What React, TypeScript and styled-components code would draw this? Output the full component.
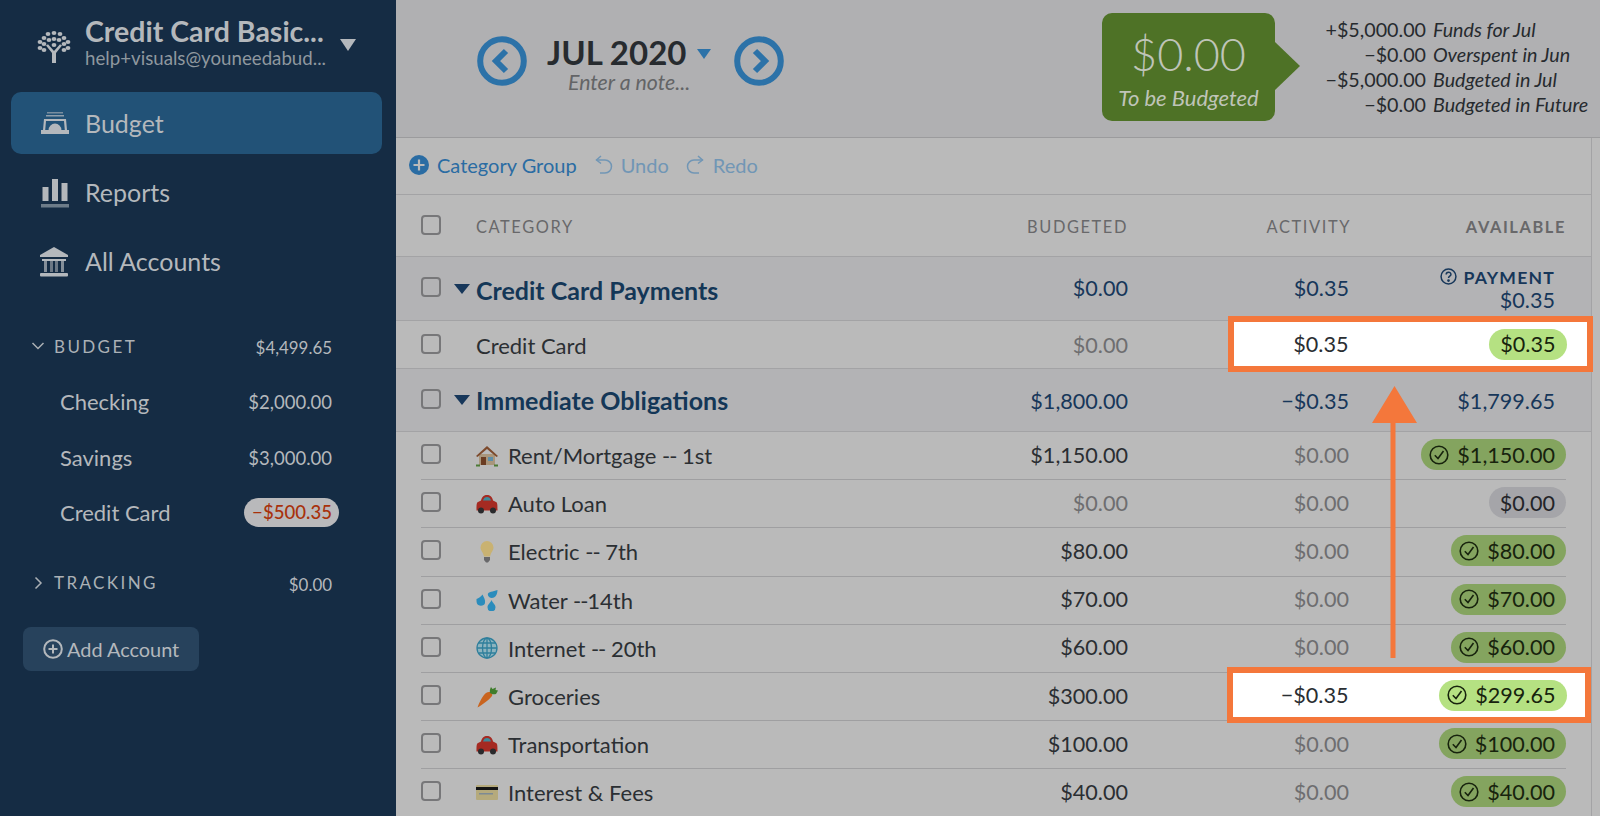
import React from "react";
import styled, { createGlobalStyle, css } from "styled-components";

const Global = createGlobalStyle`
  html, body { margin: 0; padding: 0; height: 100%; overflow: hidden; }
  body { font-family: Lato, "Open Sans", sans-serif; }
  #root { height: 100%; }
`;

const Page = styled.div`
  position: relative;
  width: 1600px;
  height: 816px;
  display: flex;
  overflow: hidden;
  background: #bababa;
`;

/* ---------- sidebar ---------- */
const Sidebar = styled.aside`
  width: 396px;
  flex: none;
  height: 816px;
  background: #152c44;
  color: #b4b8bc;
  display: flex;
  flex-direction: column;
  padding-top: 14px;
  box-sizing: border-box;
`;
const Brand = styled.div`
  height: 78px;
  display: grid;
  grid-template-columns: 85px 255px 1fr;
  align-items: center;
`;
const BrandLogo = styled.div`
  display: flex;
  justify-content: flex-end;
  padding: 3px 14px 16px 0;
`;
const BrandText = styled.div`
  display: flex;
  flex-direction: column;
  white-space: nowrap;
  padding-bottom: 22px;
`;
const BrandTitle = styled.div`
  font-size: 28.5px;
  line-height: 33px;
  font-weight: 700;
`;
const BrandMail = styled.div`
  font-size: 18.7px;
  line-height: 21px;
  color: #8f989f;
`;
const BrandCaret = styled.div`
  width: 0;
  height: 0;
  border-left: 8px solid transparent;
  border-right: 8px solid transparent;
  border-top: 12px solid #b4b8bc;
  margin-bottom: 16px;
`;
const NavItem = styled.div<{ $active?: boolean }>`
  margin: 0 14px 0 11px;
  height: 62px;
  margin-bottom: 7px;
  border-radius: 10px;
  display: grid;
  grid-template-columns: 74px 1fr;
  align-items: center;
  font-size: 25px;
  background: ${(p) => (p.$active ? "#225277" : "transparent")};
`;
const NavIcon = styled.div`
  display: flex;
  justify-content: flex-end;
  padding-right: 16px;
  padding-top: 2px;
`;
const Accounts = styled.div`
  margin-top: 32px;
  display: flex;
  flex-direction: column;
`;
const SectionRow = styled.div<{ $mt?: number }>`
  display: grid;
  grid-template-columns: 54px 1fr auto;
  align-items: center;
  height: 30px;
  padding: 0 64px 0 0;
  margin-top: ${(p) => p.$mt ?? 0}px;
`;
const SectionChevron = styled.div`
  display: flex;
  justify-content: flex-end;
  padding-right: 9px;
`;
const SectionLabel = styled.div`
  font-size: 17px;
  letter-spacing: 2.4px;
  color: #abb1b6;
`;
const SectionAmount = styled.div`
  font-size: 16.9px;
  padding-top: 3px;
`;
const AccountList = styled.div`
  margin-top: 13px;
`;
const AccountRow = styled.div`
  display: flex;
  justify-content: space-between;
  align-items: center;
  height: 55.5px;
  padding: 0 64px 0 60px;
  font-size: 22px;
`;
const AccountAmount = styled.span`
  font-size: 18.5px;
  padding-top: 1px;
`;
const DebtPill = styled.span`
  font-size: 18.6px;
  font-weight: 500;
  background: #b9b9bb;
  color: #a8310b;
  border-radius: 15px;
  height: 29px;
  line-height: 29px;
  padding: 0 7px 0 8px;
  margin-right: -7px;
`;
const AddButton = styled.div`
  margin: 29px 0 0 23px;
  width: 176px;
  height: 44px;
  box-sizing: border-box;
  border-radius: 8px;
  background: #27425c;
  display: flex;
  align-items: center;
  padding-left: 20px;
  gap: 4px;
  font-size: 19.9px;
`;

/* ---------- main ---------- */
const Main = styled.main`
  flex: 1;
  display: flex;
  flex-direction: column;
  min-width: 0;
`;
const TopBar = styled.header`
  height: 138px;
  flex: none;
  box-sizing: border-box;
  background: #b0b0b2;
  border-bottom: 1px solid #9b9b9d;
  display: flex;
  align-items: flex-start;
`;
const MonthNav = styled.div`
  margin-left: 81px;
  margin-top: 36px;
  display: flex;
  align-items: flex-start;
  width: 625px;
`;
const CircleBtn = styled.div`
  width: 50px;
  height: 50px;
  flex: none;
`;
const MonthBlock = styled.div`
  width: 207px;
  display: flex;
  flex-direction: column;
  align-items: flex-start;
  padding-left: 20px;
  box-sizing: border-box;
`;
const MonthTitle = styled.div`
  display: flex;
  align-items: center;
  gap: 11px;
  font-size: 33px;
  line-height: 33px;
  font-weight: 700;
  color: #272b2f;
  white-space: nowrap;
`;
const MonthCaret = styled.span`
  width: 0;
  height: 0;
  border-left: 7px solid transparent;
  border-right: 7px solid transparent;
  border-top: 10px solid #2c72a8;
  margin-top: 2px;
`;
const MonthNote = styled.div`
  margin: 0 0 0 21px;
  font-size: 21.3px;
  line-height: 26px;
  font-style: italic;
  color: #636466;
`;
const BudgetBubble = styled.div`
  position: relative;
  margin-top: 13px;
  width: 173px;
  height: 108px;
  background: #4e7226;
  border-radius: 10px;
  color: #bfc4b8;
  display: flex;
  flex-direction: column;
  align-items: center;
  &::after {
    content: "";
    position: absolute;
    left: 100%;
    top: 29px;
    border-top: 24px solid transparent;
    border-bottom: 24px solid transparent;
    border-left: 25px solid #4e7226;
  }
`;
const BubbleAmount = styled.div`
  font-size: 45px;
  font-weight: 300;
  line-height: 58px;
  margin-top: 12px;
`;
const BubbleLabel = styled.div`
  font-size: 22px;
  line-height: 26px;
  font-style: italic;
  margin-top: 2px;
`;
const Summary = styled.div`
  margin-left: 24px;
  margin-top: 17px;
  display: grid;
  grid-template-columns: 127px auto;
  column-gap: 7px;
  grid-auto-rows: 25px;
  align-items: center;
  font-size: 19.7px;
  color: #262a2e;
  white-space: nowrap;
`;
const SummaryAmount = styled.div`
  text-align: right;
`;
const SummaryLabel = styled.div`
  font-style: italic;
`;

const Content = styled.div`
  flex: 1;
  display: flex;
  flex-direction: column;
  border-right: 1px solid #a3a3a5;
  margin-right: 8px;
  min-height: 0;
`;
const Toolbar = styled.div`
  height: 57px;
  flex: none;
  box-sizing: border-box;
  border-bottom: 1px solid #a3a3a5;
  display: flex;
  align-items: center;
  padding: 0 0 3px 13px;
  font-size: 20px;
`;
const ToolButton = styled.div<{ $muted?: boolean; $gap: number; $ml?: number }>`
  display: flex;
  align-items: center;
  gap: ${(p) => p.$gap}px;
  margin-left: ${(p) => p.$ml ?? 0}px;
  color: ${(p) => (p.$muted ? "#7196b5" : "#2a6ca3")};
`;

const rowGrid = css`
  display: grid;
  grid-template-columns: 20px 35px 1fr 200px 221px 217px;
  align-items: center;
  box-sizing: border-box;
`;
const TableHead = styled.div`
  ${rowGrid}
  height: 62px;
  flex: none;
  padding: 0 25px 0 25px;
  border-bottom: 1px solid #a3a3a5;
  font-size: 16.4px;
  letter-spacing: 1.6px;
  color: #68686a;
`;
const HeadCell = styled.div<{ $col: number; $bold?: boolean }>`
  grid-column: ${(p) => p.$col};
  text-align: ${(p) => (p.$col === 3 ? "left" : "right")};
  font-weight: ${(p) => (p.$bold ? 700 : 400)};
  padding-top: 2px;
  margin-right: ${(p) => (p.$col === 5 ? -2 : 0)}px;
`;
const Checkbox = styled.div`
  width: 20px;
  height: 20px;
  box-sizing: border-box;
  border: 2px solid #777779;
  border-radius: 4px;
  grid-column: 1;
  margin-top: -1px;
`;
const GroupRow = styled.div<{ $h: number }>`
  ${rowGrid}
  height: ${(p) => p.$h}px;
  flex: none;
  padding: 0 25px 2px 25px;
  background: #b3b3b5;
  border-bottom: 1px solid #a3a3a5;
  color: #17375a;
  font-size: 21.6px;
`;
const GroupCaret = styled.div`
  width: 0;
  height: 0;
  margin-left: 13px;
  margin-top: 2px;
  border-left: 8px solid transparent;
  border-right: 8px solid transparent;
  border-top: 10px solid #17375a;
`;
const GroupTitle = styled.div<{ $pt: number }>`
  font-size: 25px;
  font-weight: 700;
  color: #143757;
  padding-top: ${(p) => p.$pt}px;
  white-space: nowrap;
`;
const Amount = styled.div<{ $col: number; $tone?: "dim" | "dark"; $pr?: number; $pt?: number }>`
  grid-column: ${(p) => p.$col};
  text-align: right;
  padding-right: ${(p) => p.$pr ?? 0}px;
  padding-top: ${(p) => p.$pt ?? 0}px;
  font-size: 21.6px;
  ${(p) => p.$tone === "dim" && "color: #6e6e70;"}
  ${(p) => p.$tone === "dark" && "color: #2a2e32;"}
`;
const PaymentCell = styled.div`
  grid-column: 6;
  text-align: right;
  padding: 2px 11px 0 0;
  line-height: 22px;
`;
const PaymentLabel = styled.div`
  display: flex;
  justify-content: flex-end;
  align-items: center;
  gap: 6px;
  font-size: 17.6px;
  line-height: 22px;
  font-weight: 700;
  letter-spacing: 1.2px;
`;
const HelpMark = styled.span`
  display: flex;
  margin-top: -3px;
`;
const CatRow = styled.div<{ $full?: boolean; $h?: number }>`
  ${rowGrid}
  height: ${(p) => p.$h ?? 48.2}px;
  flex: none;
  border-bottom: 1px solid ${(p) => (p.$full ? "#a3a3a5" : "#9f9fa1")};
  padding: ${(p) => (p.$full ? "0 25px" : "0 0 2px")};
  margin: ${(p) => (p.$full ? "0" : "0 25px")};
`;
const CatName = styled.div`
  grid-column: 3;
  display: flex;
  align-items: center;
  gap: 10px;
  font-size: 22px;
  color: #2b2f33;
  padding-top: 2px;
  white-space: pre;
`;
const Dashes = styled.span`
  letter-spacing: -1px;
`;
const EmojiBox = styled.div`
  width: 22px;
  height: 22px;
  flex: none;
`;
const PillCell = styled.div`
  grid-column: 6;
  display: flex;
  justify-content: flex-end;
`;
const Pill = styled.div<{ $tone: "green" | "gray" | "light"; $plain?: boolean }>`
  height: 31px;
  border-radius: 16px;
  display: flex;
  align-items: center;
  gap: 8px;
  padding: 0 11px 0 ${(p) => (p.$plain ? 11 : 8)}px;
  font-size: 21.6px;
  color: #17230d;
  background: ${(p) =>
    p.$tone === "green" ? "#84a45f" : p.$tone === "gray" ? "#a5a5a9" : "#b5e182"};
  ${(p) => p.$tone === "gray" && "color: #232428;"}
`;

/* ---------- annotations ---------- */
const Callout = styled.div<{ $left: number; $top: number; $w: number }>`
  position: absolute;
  left: ${(p) => p.$left}px;
  top: ${(p) => p.$top}px;
  width: ${(p) => p.$w}px;
  height: 56px;
  box-sizing: border-box;
  background: #fff;
  border: 6.5px solid #f4773b;
  display: flex;
  align-items: center;
  justify-content: space-between;
`;
const CalloutActivity = styled.div<{ $w: number }>`
  width: ${(p) => p.$w}px;
  text-align: right;
  font-size: 21.6px;
  color: #2a2e32;
`;
const CalloutPill = styled.div<{ $mr: number }>`
  margin-right: ${(p) => p.$mr}px;
`;
const ArrowLayer = styled.svg`
  position: absolute;
  left: 1368px;
  top: 384px;
  overflow: visible;
`;

/* ---------- drawings ---------- */
const TreeLogo = () => (
  <svg width="34" height="34" viewBox="0 0 34 34" fill="#b4b8bc">
    <path d="M15 33V23L9 15.500l2-1.200 6 6.700 6-6.700 2 1.200-6 7.500V33z" />
    {[[17,3],[17,9],[11,4],[23,4],[7,8],[27,8],[12,10],[22,10],[3,12],[31,12],[7,14],[27,14],[3,18],[31,18],[7,20],[27,20],[17,15]].map(([x,y],i)=>(
      <ellipse key={i} cx={x} cy={y} rx="2.4" ry="1.9" />
    ))}
  </svg>
);
const BudgetIcon = () => (
  <svg width="28" height="24" viewBox="0 0 28 24" fill="#b4b8bc">
    <rect x="6" y="0" width="16" height="1.5" opacity=".6" />
    <rect x="5" y="3" width="18" height="1.5" opacity=".75" />
    <path d="M3 7h22l1 11h2v4H0v-4h2zM5 9l-.8 9h3.400a6.400 6.400 0 0 1 12.800 0h3.400L23 9z" fillRule="evenodd" />
    <path d="M9.500 18a4.500 4.500 0 0 1 9 0z" opacity=".9" />
  </svg>
);
const ReportsIcon = () => (
  <svg width="28" height="30" viewBox="0 0 28 30" fill="#b4b8bc">
    <rect x="1.500" y="9" width="6" height="14" />
    <rect x="11" y="1" width="6" height="22" />
    <rect x="20.500" y="5" width="6" height="18" />
    <rect x="0" y="26" width="28" height="3.500" fill="#6d7c89" />
  </svg>
);
const BankIcon = () => (
  <svg width="30" height="30" viewBox="0 0 30 30" fill="#b4b8bc">
    <path d="M15 0 29 8v2H1V8z" />
    <rect x="3" y="12" width="24" height="2" />
    <rect x="5" y="14" width="3" height="11" opacity=".7" />
    <rect x="11" y="14" width="3" height="11" opacity=".55" />
    <rect x="16" y="14" width="3" height="11" opacity=".55" />
    <rect x="22" y="14" width="3" height="11" opacity=".7" />
    <rect x="1" y="26" width="28" height="3.500" rx="1" />
  </svg>
);
const Chevron = ({ dir }: { dir: "down" | "right" }) => (
  <svg width="14" height="14" viewBox="0 0 14 14" fill="none" stroke="#aab0b5" strokeWidth="1.500">
    {dir === "down" ? <path d="M1.500 4 7 9.500 12.500 4" /> : <path d="M4.500 1.500 10 7l-5.500 5.500" />}
  </svg>
);
const PlusOutline = () => (
  <svg width="20" height="20" viewBox="0 0 20 20" fill="none" stroke="#b4b8bc" strokeWidth="2">
    <circle cx="10" cy="10" r="8.800" />
    <path d="M10 5.500v9M5.500 10h9" />
  </svg>
);
const CircleArrow = ({ dir }: { dir: "l" | "r" }) => (
  <svg width="50" height="50" viewBox="0 0 50 50" fill="none" stroke="#2c72a8">
    <circle cx="25" cy="25" r="21.800" strokeWidth="6" />
    <path d={dir === "l" ? "M29 15 19 25l10 10" : "M21 15l10 10-10 10"} strokeWidth="6" />
  </svg>
);
const PlusSolid = () => (
  <svg width="20" height="20" viewBox="0 0 20 20">
    <circle cx="10" cy="10" r="10" fill="#2a6ca3" />
    <path d="M10 4.500v11M4.500 10h11" stroke="#bababa" strokeWidth="2.200" />
  </svg>
);
const UndoIcon = ({ flip }: { flip?: boolean }) => (
  <svg width="18" height="20" viewBox="0 0 18 20" fill="none" stroke="#7196b5" strokeWidth="1.500"
    style={flip ? { transform: "scaleX(-1)" } : undefined}>
    <path d="M6 1 1.500 5 6 8.500" />
    <path d="M1.500 5H10a6.500 6.500 0 0 1 0 13H5" />
  </svg>
);
const HelpIcon = () => (
  <svg width="17" height="17" viewBox="0 0 16 16" fill="none" stroke="#17375a" strokeWidth="1.400">
    <circle cx="8" cy="8" r="7" />
    <path d="M5.800 6.200c0-3 4.500-3 4.500-.2 0 1.700-2.300 1.700-2.300 3.400" />
    <circle cx="8" cy="11.800" r=".6" fill="#17375a" />
  </svg>
);
const CheckCircle = () => (
  <svg width="20" height="20" viewBox="0 0 20 20" fill="none" stroke="#17230d" strokeWidth="1.600">
    <circle cx="10" cy="10" r="8.800" />
    <path d="M5.800 10.300 9 13.500l5.500-7.500" />
  </svg>
);

const Emoji = ({ kind }: { kind: string }) => {
  switch (kind) {
    case "house":
      return (
        <svg width="22" height="22" viewBox="0 0 22 22">
          <rect x="3" y="9" width="16" height="11" fill="#a9967c" />
          <path d="M11 1 0 11l1.500 1L11 4l9.500 8 1.500-1z" fill="#7d4a2c" />
          <rect x="5" y="12" width="5" height="8" fill="#6a3c22" />
          <rect x="12" y="12" width="5" height="4" fill="#5d8ea8" />
          <rect x="0" y="19.500" width="4" height="2" fill="#4b7a34" />
          <rect x="18" y="19.500" width="4" height="2" fill="#4b7a34" />
        </svg>
      );
    case "car":
      return (
        <svg width="22" height="22" viewBox="0 0 22 22">
          <path d="M5 7.500c1-4 3-5.500 6-5.500s5 1.500 6 5.500l3 1.500c1.500.8 1.500 3 1.500 8.500H.5c0-5.500 0-7.700 1.500-8.500z" fill="#a52a22" />
          <path d="M7 7.500c.7-2.500 2-3.500 4-3.500s3.300 1 4 3.500z" fill="#3f8a9a" />
          <circle cx="5" cy="17.500" r="3" fill="#2a2a2c" />
          <circle cx="17" cy="17.500" r="3" fill="#2a2a2c" />
        </svg>
      );
    case "bulb":
      return (
        <svg width="22" height="22" viewBox="0 0 22 22">
          <path d="M11 0a6.500 6.500 0 0 0-6.500 6.500c0 3 2.500 4.500 3.500 9h6c1-4.500 3.500-6 3.500-9A6.500 6.500 0 0 0 11 0z" fill="#c9b272" />
          <path d="M8 16h6v3l-2 2.500h-2L8 19z" fill="#68686a" />
        </svg>
      );
    case "water":
      return (
        <svg width="22" height="22" viewBox="0 0 22 22" fill="#2b8cbc">
          <path d="M.5 10c2.200-1 4.500-2.200 6-4.500C8 8.500 9.500 11 9 14c-.6 3.500-7.400 3.500-8.200 0-.4-1.400-.3-2.700-.3-4z" />
          <path d="M21.500 1c-.2 3.500-1 6-3.500 7.500-2.500 1.200-6.200 0-6.200-3.200C12 2.500 17 2.800 21.500 1z" />
          <path d="M15.500 11c1 2.800 4 4.500 4 7.300a4 4 0 0 1-8 0c0-2.800 3-4.500 4-7.300z" />
        </svg>
      );
    case "globe":
      return (
        <svg width="22" height="22" viewBox="0 0 22 22" fill="none" stroke="#2f7f9c" strokeWidth="1.300">
          <circle cx="11" cy="11" r="10" fill="#8db4bf" />
          <ellipse cx="11" cy="11" rx="4.500" ry="10" />
          <path d="M11 1v20M1 11h20M2.500 6h17M2.500 16h17" />
        </svg>
      );
    case "carrot":
      return (
        <svg width="22" height="22" viewBox="0 0 22 22">
          <path d="M13 6c2 0 4 2 3 4C13 14 6 19 1.500 21.500 3 17 7 9 10 7c1-.7 2-1 3-1z" fill="#c9641f" />
          <path d="M14 7c-.5-2 0-4 1-6l1.500 2L20 1.500 19.500 4l2.500.5-2 3.500c-2 .5-4 .5-6-1z" fill="#3f7d2c" />
        </svg>
      );
    default:
      return (
        <svg width="22" height="22" viewBox="0 0 22 22">
          <rect x="0" y="3" width="22" height="15" rx="1" fill="#b5aa7c" />
          <rect x="0" y="5" width="22" height="3" fill="#141414" />
          <rect x="3" y="11" width="14" height="1.500" fill="#7d8a94" />
        </svg>
      );
  }
};

const categories = [
  { e: "house", name: "Rent/Mortgage -- 1st", b: "$1,150.00", a: "$1,150.00", t: "green", hi: false },
  { e: "car", name: "Auto Loan", b: "$0.00", a: "$0.00", t: "gray", hi: false },
  { e: "bulb", name: "Electric -- 7th", b: "$80.00", a: "$80.00", t: "green", hi: false },
  { e: "water", name: "Water --14th", b: "$70.00", a: "$70.00", t: "green", hi: false },
  { e: "globe", name: "Internet -- 20th", b: "$60.00", a: "$60.00", t: "green", hi: false },
  { e: "carrot", name: "Groceries", b: "$300.00", a: "$299.65", t: "green", hi: true },
  { e: "car", name: "Transportation", b: "$100.00", a: "$100.00", t: "green", hi: false },
  { e: "card", name: "Interest & Fees", b: "$40.00", a: "$40.00", t: "green", hi: false },
] as const;

const NameText = ({ text }: { text: string }) => {
  const i = text.indexOf("--");
  if (i < 0) return <span>{text}</span>;
  return (
    <span>
      {text.slice(0, i)}
      <Dashes>--</Dashes>
      {text.slice(i + 2)}
    </span>
  );
};

export default function App() {
  return (
    <Page>
      <Global />
      <Sidebar>
        <Brand>
          <BrandLogo><TreeLogo /></BrandLogo>
          <BrandText>
            <BrandTitle>Credit Card Basic...</BrandTitle>
            <BrandMail>help+visuals@youneedabud...</BrandMail>
          </BrandText>
          <BrandCaret />
        </Brand>
        <NavItem $active>
          <NavIcon><BudgetIcon /></NavIcon>Budget
        </NavItem>
        <NavItem>
          <NavIcon><ReportsIcon /></NavIcon>Reports
        </NavItem>
        <NavItem>
          <NavIcon><BankIcon /></NavIcon>All Accounts
        </NavItem>
        <Accounts>
          <SectionRow>
            <SectionChevron><Chevron dir="down" /></SectionChevron>
            <SectionLabel>BUDGET</SectionLabel>
            <SectionAmount>$4,499.65</SectionAmount>
          </SectionRow>
          <AccountList>
            <AccountRow>Checking<AccountAmount>$2,000.00</AccountAmount></AccountRow>
            <AccountRow>Savings<AccountAmount>$3,000.00</AccountAmount></AccountRow>
            <AccountRow>Credit Card<DebtPill>−$500.35</DebtPill></AccountRow>
          </AccountList>
          <SectionRow $mt={27}>
            <SectionChevron><Chevron dir="right" /></SectionChevron>
            <SectionLabel>TRACKING</SectionLabel>
            <SectionAmount>$0.00</SectionAmount>
          </SectionRow>
          <AddButton><PlusOutline />Add Account</AddButton>
        </Accounts>
      </Sidebar>

      <Main>
        <TopBar>
          <MonthNav>
            <CircleBtn><CircleArrow dir="l" /></CircleBtn>
            <MonthBlock>
              <MonthTitle>JUL 2020<MonthCaret /></MonthTitle>
              <MonthNote>Enter a note...</MonthNote>
            </MonthBlock>
            <CircleBtn><CircleArrow dir="r" /></CircleBtn>
          </MonthNav>
          <BudgetBubble>
            <BubbleAmount>$0.00</BubbleAmount>
            <BubbleLabel>To be Budgeted</BubbleLabel>
          </BudgetBubble>
          <Summary>
            <SummaryAmount>+$5,000.00</SummaryAmount><SummaryLabel>Funds for Jul</SummaryLabel>
            <SummaryAmount>−$0.00</SummaryAmount><SummaryLabel>Overspent in Jun</SummaryLabel>
            <SummaryAmount>−$5,000.00</SummaryAmount><SummaryLabel>Budgeted in Jul</SummaryLabel>
            <SummaryAmount>−$0.00</SummaryAmount><SummaryLabel>Budgeted in Future</SummaryLabel>
          </Summary>
        </TopBar>
        <Content>
          <Toolbar>
            <ToolButton $gap={8}><PlusSolid />Category Group</ToolButton>
            <ToolButton $muted $gap={8} $ml={18}><UndoIcon />Undo</ToolButton>
            <ToolButton $muted $gap={9} $ml={17}><UndoIcon flip />Redo</ToolButton>
          </Toolbar>
          <TableHead>
            <Checkbox />
            <HeadCell $col={3}>CATEGORY</HeadCell>
            <HeadCell $col={4}>BUDGETED</HeadCell>
            <HeadCell $col={5}>ACTIVITY</HeadCell>
            <HeadCell $col={6} $bold>AVAILABLE</HeadCell>
          </TableHead>
          <GroupRow $h={64}>
            <Checkbox />
            <GroupCaret />
            <GroupTitle $pt={4}>Credit Card Payments</GroupTitle>
            <Amount $col={4}>$0.00</Amount>
            <Amount $col={5}>$0.35</Amount>
            <PaymentCell>
              <PaymentLabel><HelpMark><HelpIcon /></HelpMark>PAYMENT</PaymentLabel>
              $0.35
            </PaymentCell>
          </GroupRow>
          <CatRow $full $h={48}>
            <Checkbox />
            <CatName>Credit Card</CatName>
            <Amount $col={4} $tone="dim">$0.00</Amount>
          </CatRow>
          <GroupRow $h={63}>
            <Checkbox />
            <GroupCaret />
            <GroupTitle $pt={2}>Immediate Obligations</GroupTitle>
            <Amount $col={4} $pt={4}>$1,800.00</Amount>
            <Amount $col={5} $pt={4}>−$0.35</Amount>
            <Amount $col={6} $pr={11} $pt={4}>$1,799.65</Amount>
          </GroupRow>
          {categories.map((c) => (
            <CatRow key={c.name}>
              <Checkbox />
              <CatName>
                <EmojiBox><Emoji kind={c.e} /></EmojiBox>
                <NameText text={c.name} />
              </CatName>
              <Amount $col={4} $tone={c.b === "$0.00" ? "dim" : "dark"}>{c.b}</Amount>
              {!c.hi && <Amount $col={5} $tone="dim">$0.00</Amount>}
              {!c.hi && (
                <PillCell>
                  <Pill $tone={c.t} $plain={c.t === "gray"}>
                    {c.t === "green" && <CheckCircle />}
                    {c.a}
                  </Pill>
                </PillCell>
              )}
            </CatRow>
          ))}
        </Content>
      </Main>

      <Callout $left={1228} $top={316} $w={365}>
        <CalloutActivity $w={114.5}>$0.35</CalloutActivity>
        <CalloutPill $mr={20.5}><Pill $tone="light" $plain>$0.35</Pill></CalloutPill>
      </Callout>
      <Callout $left={1227} $top={667} $w={364}>
        <CalloutActivity $w={115.5}>−$0.35</CalloutActivity>
        <CalloutPill $mr={18.5}><Pill $tone="light"><CheckCircle />$299.65</Pill></CalloutPill>
      </Callout>
      <ArrowLayer width="50" height="276" viewBox="0 0 50 276">
        <path d="M26.500 2 49 39H27.500V274h-5V39H4z" fill="#f4773b" />
      </ArrowLayer>
    </Page>
  );
}
